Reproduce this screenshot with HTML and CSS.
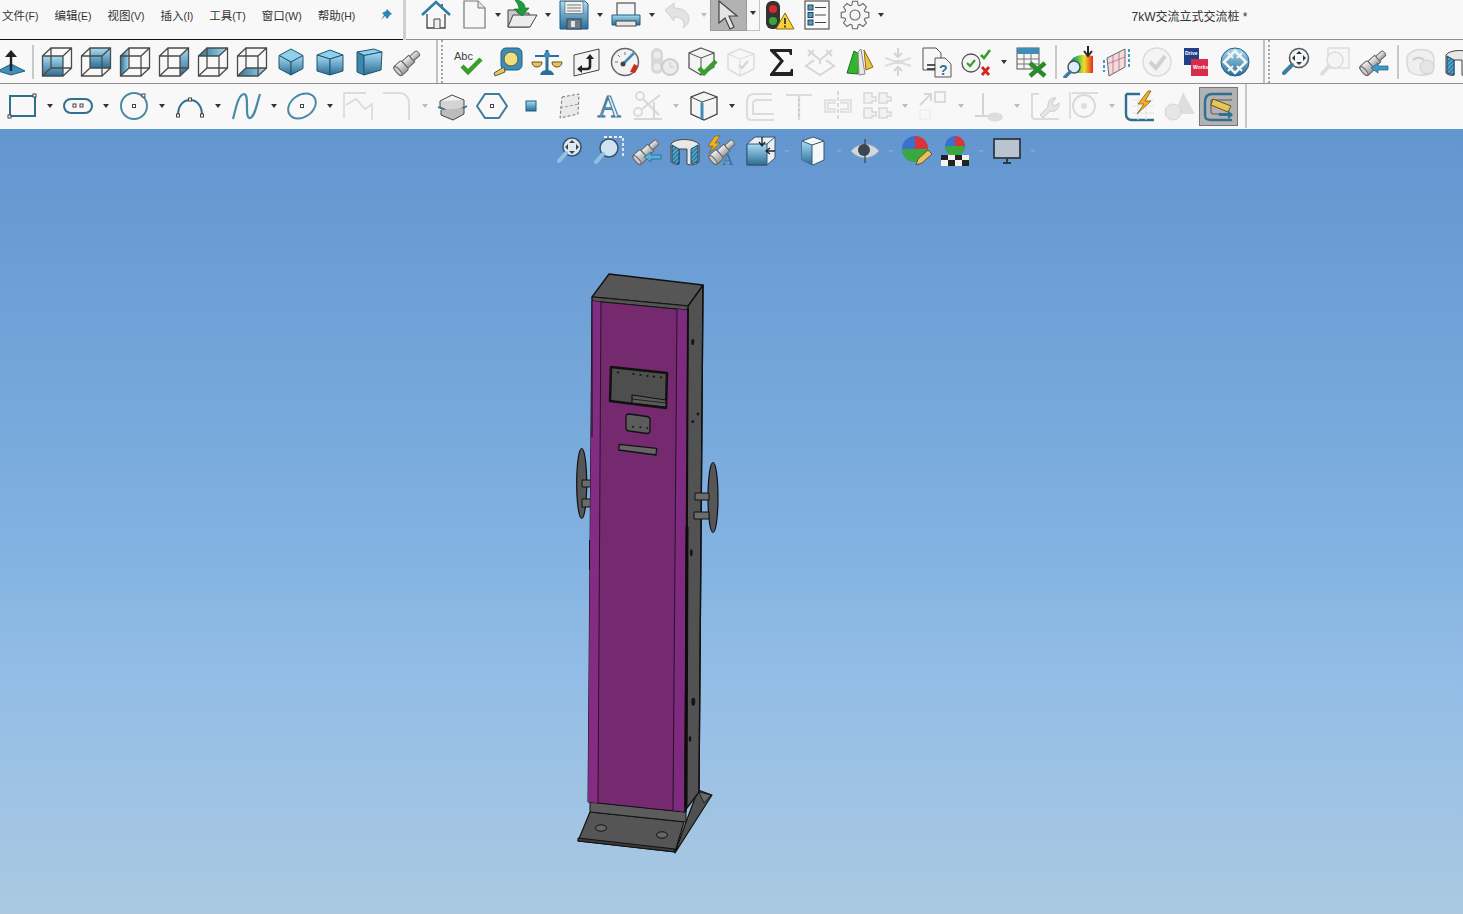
FILE: index.html
```html
<!DOCTYPE html>
<html lang="zh">
<head>
<meta charset="utf-8">
<title>7kW交流立式交流桩</title>
<link rel="stylesheet" href="styles.css">
</head>
<body>
<svg class="defs" aria-hidden="true">
<defs>
<linearGradient id="b" x1="0" y1="0" x2="0" y2="1"><stop offset="0" stop-color="#a8dcf3"/><stop offset="1" stop-color="#2a6d95"/></linearGradient>
<linearGradient id="bh" x1="0" y1="0" x2="1" y2="0"><stop offset="0" stop-color="#2f7299"/><stop offset="1" stop-color="#a8dcf3"/></linearGradient>
<linearGradient id="sil" x1="0" y1="0" x2="0" y2="1"><stop offset="0" stop-color="#f4f4f4"/><stop offset="1" stop-color="#9a9a9a"/></linearGradient>
<linearGradient id="rain" x1="0" y1="0" x2="1" y2="0"><stop offset="0" stop-color="#2540d0"/><stop offset=".35" stop-color="#2ac04a"/><stop offset=".65" stop-color="#f2e02a"/><stop offset="1" stop-color="#e02a1c"/></linearGradient>
<pattern id="hatch" width="3" height="3" patternUnits="userSpaceOnUse" patternTransform="rotate(45)"><rect width="3" height="3" fill="#2d7fa9"/><path d="M0 0v3" stroke="#bfe3f2" stroke-width="1"/></pattern>
<g id="wire" fill="none" stroke="#4a4a4a" stroke-width="1.300"><path d="M1.500 10h20.500v20H1.500zM10 2h20.500v20H10zM1.500 10L10 2M22 10L30.500 2M22 30l8.500-8M1.500 30L10 22"/></g>
<g id="tele"><g transform="rotate(-42 16 16)"><rect x="1" y="10" width="11" height="12" rx="2" fill="url(#sil)" stroke="#666"/><rect x="12" y="11.500" width="9" height="9" fill="url(#sil)" stroke="#666"/><rect x="21" y="13" width="9" height="6" rx="1.500" fill="url(#sil)" stroke="#666"/><ellipse cx="2.500" cy="16" rx="2" ry="5.500" fill="#ccc" stroke="#666"/></g></g>
<g id="mag"><circle cx="19" cy="12" r="9.500" fill="#f2f6f8" stroke="#5a5a5a" stroke-width="1.600"/><path d="M12 19L4 27" stroke="#3d7ea0" stroke-width="4" stroke-linecap="round"/></g>
</defs>

<symbol id="home" viewBox="0 0 32 32"><path d="M7 15v14h18V15" fill="#f6f6f6" stroke="#444" stroke-width="1.300"/><path d="M2 16L16 3l14 13" fill="none" stroke="#2f7ea3" stroke-width="2.600"/><path d="M22 5v5" stroke="#2f7ea3" stroke-width="2"/><path d="M14 29v-9h6v9" fill="#eee" stroke="#444"/></symbol>
<symbol id="doc" viewBox="0 0 32 32"><path d="M6 2h14l7 7v20H6z" fill="#f7f7f7" stroke="#777" stroke-width="1.200"/><path d="M20 2v7h7" fill="#e4e4e4" stroke="#777"/></symbol>
<symbol id="open" viewBox="0 0 32 32"><path d="M2 28V11h8l2 3h11v14z" fill="#c9c9c9" stroke="#444"/><path d="M2 28l5-12h24l-7 12z" fill="#ececec" stroke="#444"/><path d="M9 1c6 0 10 3 10 8h4l-7 8-8-7h5c0-3-2-6-4-9z" fill="#1f9b3c" stroke="#11702a" stroke-width=".7"/></symbol>
<symbol id="save" viewBox="0 0 32 32"><path d="M2 2h25l3 3v25H2z" fill="url(#b)" stroke="#1f5f85"/><rect x="7" y="2.500" width="18" height="12" fill="#f2f2f2" stroke="#555" stroke-width=".6"/><path d="M9 6h14M9 9h14M9 12h14" stroke="#777"/><rect x="9" y="20" width="14" height="10" fill="#6e7e88" stroke="#345"/><rect x="13" y="22" width="4" height="6" fill="#dfe6ea"/></symbol>
<symbol id="print" viewBox="0 0 32 32"><rect x="7" y="4" width="18" height="13" fill="#f5f5f5" stroke="#333"/><path d="M2 16h28v10H2z" fill="url(#b)" stroke="#1f5f85"/><rect x="6" y="22" width="20" height="5" fill="#e8e8e8" stroke="#444"/></symbol>
<symbol id="undo" viewBox="0 0 32 32"><path d="M3 11l9-7v5c9 0 15 4 15 11 0 4-3 7-6 9 2-3 2-11-9-11v4z" fill="#e3e3e3" stroke="#d0d0d0"/></symbol>
<symbol id="cursor" viewBox="0 0 32 32"><path d="M6 2v22l6-5 5 11 4-2-5-11h8z" fill="#e4e4e4" stroke="#444" stroke-width="1.200"/></symbol>
<symbol id="traffic" viewBox="0 0 32 32"><rect x="3" y="2" width="14" height="28" rx="6" fill="#333"/><circle cx="10" cy="10" r="4" fill="#d62a2a"/><circle cx="10" cy="22" r="4" fill="#36a63a"/><path d="M22 14l9 16H13z" fill="#f7d23a" stroke="#8a6a10"/><path d="M22 19v6M22 26.500v2" stroke="#222" stroke-width="1.600"/></symbol>
<symbol id="list" viewBox="0 0 32 32"><rect x="4" y="2" width="24" height="28" fill="#fafafa" stroke="#555" stroke-width="1.200"/><g fill="#4b9ec4" stroke="#245"><rect x="7" y="6" width="5" height="5"/><rect x="7" y="13.500" width="5" height="5"/><rect x="7" y="21" width="5" height="5"/></g><path d="M14 8.500h11M14 16h11M14 23.500h11" stroke="#444" stroke-width="1.200"/></symbol>
<symbol id="gear" viewBox="0 0 32 32"><path d="M12.760 6.010L13.570 2.210H18.430L19.240 6.010L20.770 6.640L24.030 4.530L27.470 7.970L25.360 11.230L25.990 12.760L29.790 13.570V18.430L25.990 19.240L25.360 20.770L27.470 24.030L24.030 27.470L20.770 25.360L19.240 25.990L18.430 29.790H13.570L12.760 25.990L11.230 25.360L7.970 27.470L4.530 24.030L6.640 20.770L6.010 19.240L2.210 18.430V13.570L6.010 12.760L6.640 11.230L4.530 7.970L7.970 4.530L11.230 6.640Z" fill="#f6f6f6" stroke="#666" stroke-width="1.100"/><circle cx="16" cy="16" r="5" fill="#f6f6f6" stroke="#666" stroke-width="1.100"/></symbol>

<symbol id="plane" viewBox="0 0 32 32"><path d="M3 25l13-7 14 7-14 4z" fill="#3f8fb8" stroke="#1f5f85"/><path d="M16 25V9" stroke="#222" stroke-width="2.400"/><path d="M10 11l6-7 6 7z" fill="#222"/></symbol>
<symbol id="cfront" viewBox="0 0 32 32"><rect x="1.500" y="10" width="20.500" height="20" fill="url(#b)"/><use href="#wire"/></symbol>
<symbol id="cback" viewBox="0 0 32 32"><rect x="10" y="2" width="20.500" height="20" fill="url(#b)"/><use href="#wire"/></symbol>
<symbol id="cleft" viewBox="0 0 32 32"><path d="M1.500 10L10 2v20l-8.500 8z" fill="url(#bh)"/><use href="#wire"/></symbol>
<symbol id="cright" viewBox="0 0 32 32"><path d="M22 10l8.500-8v20L22 30z" fill="url(#b)"/><use href="#wire"/></symbol>
<symbol id="ctop" viewBox="0 0 32 32"><path d="M1.500 10L10 2h20.500L22 10z" fill="url(#bh)"/><use href="#wire"/></symbol>
<symbol id="cbot" viewBox="0 0 32 32"><path d="M1.500 30L10 22h20.500L22 30z" fill="url(#bh)"/><use href="#wire"/></symbol>
<symbol id="iso" viewBox="0 0 32 32"><g stroke="#1f5673"><path d="M16 3l12 6.500-12 6.500L4 9.500z" fill="#8fd0ec"/><path d="M4 9.500l12 6.500v13L4 22.500z" fill="url(#b)"/><path d="M28 9.500L16 16v13l12-6.500z" fill="url(#b)"/></g></symbol>
<symbol id="dim" viewBox="0 0 32 32"><g stroke="#1f5673"><path d="M3 9l13-5 13 5-13 4z" fill="#8fd0ec"/><path d="M3 9l13 4v16L3 25z" fill="url(#b)"/><path d="M29 9l-13 4v16l13-4z" fill="url(#b)"/></g></symbol>
<symbol id="tri" viewBox="0 0 32 32"><g stroke="#1f5673"><path d="M4 6l17-3 8 3-18 3.500z" fill="#8fd0ec"/><path d="M4 6l7 3.500V29l-7-3z" fill="#3f86ab"/><path d="M11 9.500L29 6l-1 18-17 5z" fill="url(#b)"/></g></symbol>
<symbol id="scope" viewBox="0 0 32 32"><use href="#tele"/></symbol>

<symbol id="tape" viewBox="0 0 32 32"><rect x="9" y="2" width="21" height="22" rx="5" fill="#3d8db5" stroke="#1f5f85"/><circle cx="19" cy="13" r="7" fill="#f0e07a" stroke="#555"/><path d="M12 21L2 27l1 3 10-4z" fill="#e9c84f" stroke="#555"/></symbol>
<symbol id="scale" viewBox="0 0 32 32"><path d="M16 4v20" stroke="#2a7099" stroke-width="3"/><path d="M4 10h24" stroke="#2a7099" stroke-width="2"/><path d="M9 29c1-4 4-5 7-5s6 1 7 5z" fill="#2a7099"/><path d="M1 16h10c0 3-2 5-5 5s-5-2-5-5zM21 16h10c0 3-2 5-5 5s-5-2-5-5z" fill="#e6c35c" stroke="#6a5520"/><circle cx="16" cy="9" r="3" fill="#3d8db5"/></symbol>
<symbol id="refbox" viewBox="0 0 32 32"><path d="M4 9l25-6v21L4 30z" fill="#f4f4f4" stroke="#444"/><path d="M10 23h7c2 0 3-1 3-3v-8" fill="none" stroke="#222" stroke-width="2.600"/><path d="M16 13l4-5 4 5zM12 19l-5 4 5 4z" fill="#222"/></symbol>
<symbol id="gauge" viewBox="0 0 32 32"><circle cx="16" cy="16" r="13.500" fill="#f2f2f2" stroke="#666" stroke-width="1.500"/><path d="M21 26l4-8 4 2-3 7z" fill="#d42a1c"/><path d="M14 18L25 7" stroke="#3d8db5" stroke-width="2.500"/><circle cx="14" cy="18" r="2.500" fill="#444"/><path d="M6 16h3M16 6v3M9 9l2 2" stroke="#777"/></symbol>
<symbol id="pause" viewBox="0 0 32 32"><rect x="3" y="2" width="12" height="26" rx="6" fill="#d8d8d8"/><circle cx="9" cy="9" r="3.500" fill="#ececec"/><circle cx="9" cy="21" r="3.500" fill="#ececec"/><circle cx="22" cy="21" r="8" fill="#ececec" stroke="#ccc" stroke-width="2"/><path d="M22 16v5h4" stroke="#ccc" fill="none"/></symbol>
<symbol id="cubeok" viewBox="0 0 32 32"><path d="M14 2l13 5v14l-13 8-12-7V7z" fill="#f4f4f4" stroke="#555" stroke-width="1.300"/><path d="M2 7l12 5 13-5M14 12v17" fill="none" stroke="#555"/><path d="M12 22l5 5 12-12" fill="none" stroke="#3a9e2c" stroke-width="4.500"/></symbol>
<symbol id="cubeoff" viewBox="0 0 32 32"><path d="M14 3l14 5v15l-14 7-12-7V8z" fill="#f7f7f7" stroke="#dcdcdc" stroke-width="1.500"/><path d="M2 8l12 5 14-5M14 13v17" fill="none" stroke="#dcdcdc"/><path d="M13 19l3 3 6-7" fill="none" stroke="#d4d4d4" stroke-width="2"/></symbol>
<symbol id="sum" viewBox="0 0 32 32"><path d="M5 3h22v6h-2l-1-3H11l8 9-9 11h15l1-3h2v7H5v-2l10-13L5 5z" fill="#222"/></symbol>
<symbol id="check3" viewBox="0 0 32 32"><path d="M4 4l12 10L28 4M10 14l-8 6 14 9 14-9-8-6M16 14v4" fill="none" stroke="#d6d6d6" stroke-width="2"/><path d="M4 10l6-6M22 4l6 6" stroke="#d6d6d6" stroke-width="2"/></symbol>
<symbol id="draft" viewBox="0 0 32 32"><path d="M4 27L11 5l5 3-1 20z" fill="#35b52f" stroke="#16701a"/><path d="M15 6l3-3 4 25-6 1z" fill="#e8e8e8" stroke="#888"/><path d="M21 4l9 17-7 3z" fill="#eac34a" stroke="#8a6a10"/></symbol>
<symbol id="inter" viewBox="0 0 32 32"><path d="M3 12l9 3h8l9-3M3 20l9-3h8l9 3" fill="none" stroke="#dcdcdc" stroke-width="2"/><path d="M16 2v9M16 21v9M12 7l4 4 4-4M12 25l4-4 4 4" fill="none" stroke="#d4d4d4" stroke-width="2"/></symbol>
<symbol id="chkx" viewBox="0 0 32 32"><circle cx="11" cy="17" r="9" fill="#f4f4f4" stroke="#555" stroke-width="1.300"/><path d="M7 17l3 3 5-6" fill="none" stroke="#3a9e2c" stroke-width="2.200"/><path d="M21 9l3 3 6-8" fill="none" stroke="#3a9e2c" stroke-width="2.600"/><path d="M22 21l7 8M29 21l-7 8" stroke="#d4281c" stroke-width="2.800"/></symbol>
<symbol id="tblx" viewBox="0 0 32 32"><rect x="1" y="2" width="22" height="21" fill="#f6f6f6" stroke="#555"/><rect x="1" y="2" width="22" height="6" fill="#3d8db5"/><path d="M1 13h22M1 18h22M8 8v15M15 8v15" stroke="#777"/><path d="M14 17l15 13M29 17L14 30" stroke="#2c8a2c" stroke-width="4.500"/></symbol>
<symbol id="simul" viewBox="0 0 32 32"><path d="M5 20c4-12 14-12 25-10v17H14z" fill="url(#rain)"/><circle cx="11" cy="21" r="6" fill="#dfeef4" stroke="#456" stroke-width="1.500"/><path d="M7 26l-5 5" stroke="#3d7ea0" stroke-width="3.500" stroke-linecap="round"/><path d="M25 0v8M21 5l4 5 4-5" fill="none" stroke="#222" stroke-width="2"/></symbol>
<symbol id="flow" viewBox="0 0 32 32"><path d="M5 12L23 3v18L7 30z" fill="#efdcd8" stroke="#666"/><path d="M11 9v18M17 6v18M5 18l18-7" stroke="#b58" stroke-width=".7"/><path d="M27 3v20M2 14v12" stroke="#3d9bc6" stroke-width="2" stroke-dasharray="3 2"/></symbol>
<symbol id="okoff" viewBox="0 0 32 32"><circle cx="16" cy="16" r="14" fill="#f4f4f4" stroke="#dcdcdc" stroke-width="1.500"/><path d="M9 16l6 6L24 10" fill="none" stroke="#d0d0d0" stroke-width="4"/></symbol>
<symbol id="rings" viewBox="0 0 32 32"><circle cx="16" cy="16" r="14" fill="url(#b)" stroke="#1f5f85"/><path d="M16 5L5 16l11 11 11-11z" fill="none" stroke="#f4f4f4" stroke-width="2.600"/><path d="M9 7l5 5M23 7l-5 5M9 25l5-5M23 25l-5-5" stroke="#f4f4f4" stroke-width="2"/></symbol>
<symbol id="zoomfit" viewBox="0 0 32 32"><use href="#mag"/><path d="M19 5l3 3h-6zM19 19l3-3h-6zM12 12l3-3v6zM26 12l-3-3v6z" fill="#333"/></symbol>
<symbol id="zoomoff" viewBox="0 0 32 32"><rect x="9" y="2" width="21" height="20" fill="#f6f6f6" stroke="#ddd" stroke-width="1.500"/><circle cx="16" cy="14" r="8" fill="#f4f4f4" stroke="#ddd" stroke-width="1.500"/><path d="M10 20L3 28" stroke="#ddd" stroke-width="3.500" stroke-linecap="round"/></symbol>
<symbol id="prev" viewBox="0 0 32 32"><use href="#tele"/><path d="M30 20H20v-3l-7 5 7 5v-3h10z" fill="#3d9bcc" stroke="#1f5f85" stroke-width=".7"/></symbol>
<symbol id="rotoff" viewBox="0 0 32 32"><path d="M3 9c6-7 18-7 24-2 3 3 2 17 0 20-7 3-17 3-22-1-3-3-4-13-2-17z" fill="#efefef" stroke="#d8d8d8" stroke-width="1.500"/><circle cx="22" cy="21" r="7" fill="#e4e4e4" stroke="#d0d0d0"/><path d="M8 14c3-3 8-3 11 0" fill="none" stroke="#ccc" stroke-width="2"/></symbol>
<symbol id="section" viewBox="0 0 32 32"><path d="M2 9c4-6 22-6 28 0v18c-5 4-10 3-12 2V14H10v15c-3 1-6 0-8-2z" fill="#e8e8e8" stroke="#444"/><path d="M3 10l7 4v15l-7-2zM29 10l-7 4v15l7-2z" fill="url(#hatch)" stroke="#1b4e6b"/></symbol>

<symbol id="rectt" viewBox="0 0 32 32"><rect x="4" y="6" width="25" height="20" fill="none" stroke="#2f7090" stroke-width="2"/><rect x="27" y="4" width="3" height="3" fill="#fff" stroke="#444"/><rect x="2" y="25" width="3" height="3" fill="#fff" stroke="#444"/></symbol>
<symbol id="slot" viewBox="0 0 32 32"><rect x="2" y="9" width="28" height="14" rx="7" fill="none" stroke="#2f7090" stroke-width="2"/><rect x="11" y="14" width="3" height="3" fill="#fff" stroke="#444"/><rect x="18" y="14" width="3" height="3" fill="#fff" stroke="#444"/></symbol>
<symbol id="circ" viewBox="0 0 32 32"><circle cx="16" cy="16" r="13" fill="none" stroke="#4b8aa6" stroke-width="2"/><rect x="14.500" y="14.500" width="3" height="3" fill="#fff" stroke="#444"/><rect x="24" y="4" width="3" height="3" fill="#fff" stroke="#444"/></symbol>
<symbol id="arc" viewBox="0 0 32 32"><path d="M4 25C4 16 9 10 16 10s12 6 12 15" fill="none" stroke="#2f7090" stroke-width="2"/><g fill="#fff" stroke="#444"><rect x="14.500" y="8" width="3" height="3"/><rect x="2.500" y="24" width="3" height="3"/><rect x="26.500" y="24" width="3" height="3"/></g></symbol>
<symbol id="spline" viewBox="0 0 32 32"><path d="M3 29C6 18 8 5 14 4c6 0 0 25 6 24 5-1 7-15 10-24" fill="none" stroke="#4b8aa6" stroke-width="2.200"/></symbol>
<symbol id="ellip" viewBox="0 0 32 32"><ellipse cx="16" cy="16" rx="15" ry="11" transform="rotate(-35 16 16)" fill="none" stroke="#4b8aa6" stroke-width="2"/><rect x="14.500" y="14.500" width="3" height="3" fill="#fff" stroke="#444"/></symbol>
<symbol id="polyoff" viewBox="0 0 32 32"><path d="M2 28V3h22M4 15l10-6 9 10 7-5v16" fill="none" stroke="#dcdcdc" stroke-width="1.800"/></symbol>
<symbol id="filletoff" viewBox="0 0 32 32"><path d="M2 3h16c6 0 10 4 10 10v17" fill="none" stroke="#dcdcdc" stroke-width="2"/></symbol>
<symbol id="plates" viewBox="0 0 32 32"><path d="M3 11l12-6 12 5-11 6z" fill="#f4f4f4" stroke="#444"/><path d="M3 11v6l13 6 11-6v-7" fill="#d4d4d4" stroke="#444"/><path d="M1 17l15 7 14-8" fill="none" stroke="#2f7090" stroke-width="1.500"/><path d="M4 20v5l12 5 11-6v-6" fill="#bcbcbc" stroke="#444"/></symbol>
<symbol id="hex" viewBox="0 0 32 32"><path d="M9 4h14l8 12-8 12H9L1 16z" fill="none" stroke="#3f7d9b" stroke-width="2"/><rect x="14.500" y="14.500" width="3" height="3" fill="#fff" stroke="#444"/></symbol>
<symbol id="pt" viewBox="0 0 32 32"><rect x="11" y="11" width="10" height="10" fill="url(#b)" stroke="#1f5f85"/></symbol>
<symbol id="plnoff" viewBox="0 0 32 32"><path d="M8 7l17-3-1 20-18 4z" fill="#eaeaea" stroke="#777" stroke-dasharray="3 2"/><path d="M6 18l19-4" stroke="#999" stroke-dasharray="3 2"/></symbol>
<symbol id="trimoff" viewBox="0 0 32 32"><circle cx="8" cy="6" r="4" fill="none" stroke="#dcdcdc" stroke-width="2"/><circle cx="6" cy="22" r="4" fill="none" stroke="#dcdcdc" stroke-width="2"/><path d="M11 9l16 16M10 19L28 5M2 29h28M22 12v18" stroke="#d8d8d8" stroke-width="2"/></symbol>
<symbol id="wbox" viewBox="0 0 32 32"><path d="M16 2l13 5v17l-13 6-13-6V7z" fill="#f4f4f4" stroke="#444" stroke-width="1.300"/><path d="M3 7l11 5 15-5M14 12v18" fill="none" stroke="#444"/><path d="M14 13v16" stroke="#3d8db5" stroke-width="3"/></symbol>
<symbol id="offs" viewBox="0 0 32 32"><path d="M28 4H10C5 4 3 7 3 12v14c0 3 2 4 5 4h22" fill="none" stroke="#dcdcdc" stroke-width="2"/><path d="M28 10H13c-3 0-4 2-4 4v10h21" fill="none" stroke="#dcdcdc" stroke-width="2"/></symbol>
<symbol id="toff" viewBox="0 0 32 32"><path d="M3 5h26M16 5v25" fill="none" stroke="#dcdcdc" stroke-width="2.200"/><path d="M16 9v18" stroke="#bbb" stroke-dasharray="2 3"/></symbol>
<symbol id="mirr" viewBox="0 0 32 32"><path d="M16 1v30" stroke="#d0d0d0" stroke-width="1.500" stroke-dasharray="4 2"/><path d="M13 10H3v12h10v-3H6v-6h7zM19 10h10v12H19v-3h7v-6h-7z" fill="#f2f2f2" stroke="#dcdcdc" stroke-width="1.500"/></symbol>
<symbol id="pat" viewBox="0 0 32 32"><path d="M3 3h8v4h4v4H11v2H3zM18 3h8v4h4v4h-4v2h-8zM3 18h8v4h4v4H11v2H3zM18 18h8v4h4v4h-4v2h-8z" fill="#f2f2f2" stroke="#d8d8d8" stroke-width="1.500"/></symbol>
<symbol id="moveoff" viewBox="0 0 32 32"><path d="M3 15L13 5M7 4h7v7" fill="none" stroke="#d8d8d8" stroke-width="2"/><rect x="18" y="2" width="10" height="10" fill="none" stroke="#d8d8d8" stroke-width="1.800"/><rect x="3" y="20" width="10" height="9" fill="none" stroke="#e8e8e8"/></symbol>
<symbol id="relat" viewBox="0 0 32 32"><path d="M10 3v23M2 26h18" fill="none" stroke="#d4d4d4" stroke-width="2"/><ellipse cx="22" cy="27" rx="8" ry="4.500" fill="#ddd"/></symbol>
<symbol id="wrench" viewBox="0 0 32 32"><path d="M2 4h8M3 4v22c0 2 1 3 3 3h24" fill="none" stroke="#dcdcdc" stroke-width="2"/><path d="M11 25l8-8c-1-5 3-10 8-9l-4 5 2 3 5-3c1 5-4 10-9 8l-7 7z" fill="#e4e4e4" stroke="#ccc"/></symbol>
<symbol id="ringoff" viewBox="0 0 32 32"><path d="M2 2v27M4 3h26" stroke="#dcdcdc" stroke-width="1.800"/><circle cx="16" cy="16" r="11" fill="none" stroke="#d8d8d8" stroke-width="1.800"/><circle cx="16" cy="16" r="3" fill="#ddd"/></symbol>
<symbol id="bolt" viewBox="0 0 32 32"><path d="M2 4h14M2 4v20c0 4 2 6 6 6h22" fill="none" stroke="#2f7090" stroke-width="2.400"/><path d="M8 10h22M8 16h22M8 23h22M14 5v25M22 5v25" stroke="#e4e4e4"/><path d="M24 1l-10 13h6l-7 10 14-13h-6l6-10z" fill="#f2b21f" stroke="#8a5a10" stroke-width=".8"/></symbol>
<symbol id="shapes" viewBox="0 0 32 32"><path d="M20 2l12 22H12z" fill="#dedede"/><circle cx="10" cy="22" r="8" fill="#e6e6e6" stroke="#d4d4d4"/></symbol>
<symbol id="instant" viewBox="0 0 32 32"><path d="M30 3H10C5 3 3 6 3 11v13c0 4 2 5 6 5h21" fill="none" stroke="#2f7090" stroke-width="2.400"/><path d="M9 9h21M9 9v11c0 2 1 3 3 3h18" fill="none" stroke="#777" stroke-width="1.500"/><path d="M11 8l18 7-3 6-17-7z" fill="#e7c65a" stroke="#6a5520"/><path d="M17 22h9v-3l5 5-5 4v-3h-9z" fill="#2f7090"/></symbol>

<symbol id="hdep" viewBox="0 0 32 32"><circle cx="17" cy="12" r="9" fill="#dde9f3" stroke="#39556b" stroke-width="1.500"/><path d="M11 18l-7 8" stroke="#8dc3de" stroke-width="4" stroke-linecap="round"/><path d="M17 5l3 3h-6zM17 19l3-3h-6zM10 12l3-3v6zM24 12l-3-3v6z" fill="#444"/></symbol>
<symbol id="harea" viewBox="0 0 32 32"><path d="M11 2h19v19" fill="none" stroke="#e8eff5" stroke-dasharray="3 2" stroke-width="1.800"/><circle cx="16" cy="13" r="9" fill="#cfe2f1" stroke="#39556b" stroke-width="1.500"/><path d="M10 19l-7 8" stroke="#8dc3de" stroke-width="4" stroke-linecap="round"/></symbol>
<symbol id="hprev" viewBox="0 0 32 32"><use href="#tele"/><path d="M30 20H20v-3l-7 5 7 5v-3h10z" fill="#57b0de" stroke="#1f5f85" stroke-width=".7"/></symbol>
<symbol id="horient" viewBox="0 0 32 32"><path d="M2 9l8-7h20v21l-8 7H2z" fill="#eaf1f6" stroke="#39556b"/><path d="M2 9h20v21H2z" fill="url(#b)" stroke="#39556b"/><path d="M22 9l8-7" stroke="#39556b"/><path d="M17 2v8M14 7l3 4 3-4M30 16h-9M25 13l-4 3 4 3" fill="none" stroke="#222" stroke-width="1.300"/></symbol>
<symbol id="hdisp" viewBox="0 0 32 32"><path d="M16 2l11 4v19l-11 5-11-5V6z" fill="#f4f8fb" stroke="#39556b"/><path d="M5 6l10 4v20L5 25z" fill="url(#b)"/><path d="M5 6l10 4 12-4M15 10v20" fill="none" stroke="#39556b"/></symbol>
<symbol id="heye" viewBox="0 0 32 32"><path d="M2 16c7-9 21-9 28 0-7 9-21 9-28 0z" fill="#cfd8df" stroke="#9ba9b4"/><circle cx="15" cy="15" r="6" fill="#3a4650"/><path d="M16 4v24" stroke="#39444e" stroke-width="1.200"/></symbol>
<symbol id="hball" viewBox="0 0 32 32"><circle cx="14" cy="14" r="13" fill="#3a70d0"/><path d="M14 1a13 13 0 0 1 13 13H14z" fill="#d8353a"/><path d="M1 14h26a13 13 0 0 1-26 0z" fill="#39a83f"/><path d="M15 30l2-6 10-9 4 4-10 9z" fill="#eac34a" stroke="#555"/></symbol>
<symbol id="hsc" viewBox="0 0 32 32"><circle cx="16" cy="11" r="10" fill="#3a70d0"/><path d="M16 1a10 10 0 0 1 10 10H16z" fill="#d8353a"/><path d="M6 11h20a10 10 0 0 1-20 0z" fill="#39a83f"/><path d="M2 20h28v11H2z" fill="#f2f2f2"/><path d="M2 20h7v5H2zM16 20h7v5h-7zM9 25h7v6H9zM23 25h7v6h-7z" fill="#222"/></symbol>
<symbol id="hmon" viewBox="0 0 32 32"><rect x="3" y="4" width="26" height="19" fill="#b9c4ce" stroke="#2e3a44" stroke-width="1.800"/><path d="M12 28h8M16 23v5" stroke="#2e3a44" stroke-width="2"/></symbol>
</svg>

<header class="ribbon">
  <div class="row r1">
    <nav class="menu">
      <span class="m">文件<i>(F)</i></span><span class="m">编辑<i>(E)</i></span><span class="m">视图<i>(V)</i></span><span class="m">插入<i>(I)</i></span><span class="m">工具<i>(T)</i></span><span class="m">窗口<i>(W)</i></span><span class="m">帮助<i>(H)</i></span>
    </nav>
    <svg class="pin" viewBox="0 0 14 14"><path d="M8 1l5 5-2 1-2 3-1 1-2-3-4 4 3-5-2-2 2-1 2-1z" fill="#2f86b4"/></svg>
    <span class="vline"></span>
    <div class="tools">
      <svg class="ic"><use href="#home"/></svg>
      <svg class="ic"><use href="#doc"/></svg><span class="drop nar"></span>
      <svg class="ic"><use href="#open"/></svg><span class="drop"></span>
      <svg class="ic"><use href="#save"/></svg><span class="drop"></span>
      <svg class="ic"><use href="#print"/></svg><span class="drop"></span>
      <svg class="ic"><use href="#undo"/></svg><span class="drop off nar2"></span>
      <span class="sel"><svg class="ic"><use href="#cursor"/></svg></span><span class="drop seld"></span>
      <svg class="ic"><use href="#traffic"/></svg>
      <svg class="ic"><use href="#list"/></svg>
      <svg class="ic"><use href="#gear"/></svg><span class="drop"></span>
    </div>
    <div class="title">7kW交流立式交流桩 *</div>
  </div>
  <div class="row r2">
    <svg class="ic first"><use href="#plane"/></svg><span class="sep s1"></span>
    <svg class="ic"><use href="#cfront"/></svg><svg class="ic"><use href="#cback"/></svg><svg class="ic"><use href="#cleft"/></svg><svg class="ic"><use href="#cright"/></svg><svg class="ic"><use href="#ctop"/></svg><svg class="ic"><use href="#cbot"/></svg><svg class="ic"><use href="#iso"/></svg><svg class="ic"><use href="#dim"/></svg><svg class="ic"><use href="#tri"/></svg><svg class="ic"><use href="#scope"/></svg>
    <span class="dsep"></span>
    <svg class="ic" viewBox="0 0 32 32"><text x="1" y="14" class="abc">Abc</text><path d="M9 20l6 6L28 13" fill="none" stroke="#3a9e2c" stroke-width="4.500"/></svg><svg class="ic"><use href="#tape"/></svg><svg class="ic"><use href="#scale"/></svg><svg class="ic"><use href="#refbox"/></svg><svg class="ic"><use href="#gauge"/></svg><svg class="ic"><use href="#pause"/></svg><svg class="ic"><use href="#cubeok"/></svg><svg class="ic"><use href="#cubeoff"/></svg><svg class="ic"><use href="#sum"/></svg><svg class="ic"><use href="#check3"/></svg><svg class="ic"><use href="#draft"/></svg><svg class="ic"><use href="#inter"/></svg>
    <svg class="ic" viewBox="0 0 32 32"><path d="M2 2h13l5 5v17H2z" fill="#f7f7f7" stroke="#555"/><path d="M14 12h10l6 6v13H14z" fill="#f5f5f5" stroke="#555"/><text x="18" y="29" class="q">?</text><path d="M6 19h8M6 23h8" stroke="#222" stroke-width="1.500"/></svg><svg class="ic"><use href="#chkx"/></svg><span class="drop w17"></span>
    <svg class="ic"><use href="#tblx"/></svg><span class="sep"></span>
    <svg class="ic"><use href="#simul"/></svg><svg class="ic"><use href="#flow"/></svg><svg class="ic"><use href="#okoff"/></svg>
    <svg class="ic" viewBox="0 0 32 32"><rect x="4" y="2" width="15" height="17" fill="#1f3f88"/><rect x="11" y="13" width="17" height="17" fill="#d92b4c"/><text x="5" y="9" class="dwt">Drive</text><text x="13" y="23" class="dwt">Works</text></svg><svg class="ic"><use href="#rings"/></svg>
    <span class="dsep"></span>
    <svg class="ic"><use href="#zoomfit"/></svg><svg class="ic"><use href="#zoomoff"/></svg><svg class="ic"><use href="#prev"/></svg><span class="sep"></span>
    <svg class="ic"><use href="#rotoff"/></svg><svg class="ic"><use href="#section"/></svg>
  </div>
  <div class="row r3">
    <svg class="ic"><use href="#rectt"/></svg><span class="drop w17"></span>
    <svg class="ic"><use href="#slot"/></svg><span class="drop w17"></span>
    <svg class="ic"><use href="#circ"/></svg><span class="drop w17"></span>
    <svg class="ic"><use href="#arc"/></svg><span class="drop w17"></span>
    <svg class="ic"><use href="#spline"/></svg><span class="drop w17"></span>
    <svg class="ic"><use href="#ellip"/></svg><span class="drop w17"></span>
    <svg class="ic"><use href="#polyoff"/></svg><svg class="ic"><use href="#filletoff"/></svg><span class="drop w17 off"></span>
    <svg class="ic"><use href="#plates"/></svg><svg class="ic"><use href="#hex"/></svg><svg class="ic"><use href="#pt"/></svg><svg class="ic"><use href="#plnoff"/></svg>
    <svg class="ic ovf" viewBox="0 0 32 32"><text x="16" y="27" class="bigA">A</text></svg><svg class="ic"><use href="#trimoff"/></svg><span class="drop w17 off"></span>
    <svg class="ic"><use href="#wbox"/></svg><span class="drop w17"></span>
    <svg class="ic"><use href="#offs"/></svg><svg class="ic"><use href="#toff"/></svg><svg class="ic"><use href="#mirr"/></svg><svg class="ic"><use href="#pat"/></svg><span class="drop w17 off"></span>
    <svg class="ic"><use href="#moveoff"/></svg><span class="drop w17 off"></span>
    <svg class="ic"><use href="#relat"/></svg><span class="drop w17 off"></span>
    <svg class="ic"><use href="#wrench"/></svg><svg class="ic"><use href="#ringoff"/></svg><span class="drop w17 off"></span>
    <svg class="ic"><use href="#bolt"/></svg><svg class="ic"><use href="#shapes"/></svg>
    <span class="act"><svg class="ic"><use href="#instant"/></svg></span>
    <span class="sep s3"></span>
  </div>
</header>

<main class="view">
  <div class="hud">
    <svg class="hi"><use href="#hdep"/></svg><svg class="hi"><use href="#harea"/></svg><svg class="hi"><use href="#hprev"/></svg><svg class="hi"><use href="#section"/></svg>
    <svg class="hi ovf" viewBox="0 0 32 32"><path d="M8 1L1 11h5L2 18l11-10H8l5-7z" fill="#f2b21f" stroke="#8a5a10" stroke-width=".7"/><use href="#tele"/><text x="15" y="30" class="hA">A</text></svg><svg class="hi"><use href="#horient"/></svg><span class="hd"></span>
    <svg class="hi"><use href="#hdisp"/></svg><span class="hd"></span>
    <svg class="hi"><use href="#heye"/></svg><span class="hd"></span>
    <svg class="hi"><use href="#hball"/></svg><svg class="hi"><use href="#hsc"/></svg><span class="hd"></span>
    <svg class="hi"><use href="#hmon"/></svg><span class="hd"></span>
  </div>
  <svg class="model" viewBox="560 260 170 610">
    <g stroke="#111" stroke-linejoin="round">
      <!-- left handle -->
      <ellipse cx="581.700" cy="483.500" rx="5" ry="35" fill="#565656" stroke-width="1.200"/>
      <path d="M582 480h10v7h-10zM582 499h10v8h-10z" fill="#6b6b6b" stroke-width="1"/>
      <!-- base -->
      <path d="M686 822L698 790l14 5-37 58z" fill="#505050" stroke-width="1.200"/>
      <path d="M699 792l12 3-7 8z" fill="#6a6a6a" stroke-width=".8"/>
      <path d="M590 812l94 10-9 30-97-11z" fill="#555" stroke-width="1.200"/>
      <path d="M578 838l97 11v3l-97-11z" fill="#3a3a3a" stroke-width="1"/>
      <path d="M590 802l96 10v10l-96-10z" fill="#5c5c5c" stroke-width="1"/>
      <ellipse cx="601" cy="828" rx="5.500" ry="3.200" fill="#666" stroke-width="1"/>
      <ellipse cx="662" cy="835" rx="5.500" ry="3.200" fill="#666" stroke-width="1"/>
      <!-- body -->
      <path d="M688 306l15-21-4 507-15 20z" fill="#525252" stroke-width="1.300"/>
      <path d="M592 297L609 274l94 11-15 21z" fill="#565656" stroke-width="1.300"/>
      <path d="M592 297l96 9-1 4-95-9z" fill="#545454" stroke-width=".8"/>
      <path d="M592 301l95 9-3 502-96-10z" fill="#752a70" stroke-width="1"/>
      <path d="M592 301l9 1-3 501-10-1z" fill="#832d82" stroke="none"/>
      <path d="M677 309l10 1-3 502-11-2z" fill="#7e2a7e" stroke="none"/>
      <path d="M601 301l-3 502M677 309l-4 501" fill="none" stroke="#2a1030" stroke-width="1"/>
      <path d="M688 308l-2 504" fill="none" stroke="#0c0c0c" stroke-width="1.600"/>
      <path d="M687 527l-1 280" fill="none" stroke="#0c0c0c" stroke-width="3"/>
      <path d="M592 297v140M589.500 540v30" fill="none" stroke-width="1"/>
      <path d="M703 285l-4 507" fill="none" stroke-width="1.300"/>
      <!-- screen -->
      <path d="M611 367l56 6-1 35-56-7z" fill="#4e4e4e" stroke-width="2.500"/>
      <path d="M632 395l34 5v7l-34-4z" fill="#5a5a5a" stroke-width="1.200"/>
      <path d="M632 399l34 4" fill="none" stroke-width=".8"/>
      <g fill="#141414" stroke="none"><circle cx="618" cy="372.500" r="1.100"/><circle cx="633.500" cy="374" r="1.100"/><circle cx="640.500" cy="375" r="1.100"/><circle cx="647.500" cy="376" r="1.100"/><circle cx="654" cy="376.700" r="1.100"/><circle cx="661" cy="377.300" r="1.100"/></g>
      <!-- small panel -->
      <path d="M629 414l18 2.500q3 .5 3 3v11q0 3-3 3l-18-2.500q-3-.5-3-3v-11q0-3 3-3z" fill="#5c5c5c" stroke-width="1.300"/>
      <g fill="#1a1a1a" stroke="none"><circle cx="633" cy="426.700" r="1"/><circle cx="640.300" cy="427.300" r="1"/><circle cx="647.300" cy="428" r="1"/></g>
      <!-- slot -->
      <path d="M619.300 444.300l37.400 4-.7 6.700-37.300-5z" fill="#666" stroke-width="1.300"/>
      <!-- side holes -->
      <g fill="#151515" stroke="none"><ellipse cx="692.700" cy="342" rx="1.500" ry="3"/><circle cx="698" cy="414" r="1.400"/><circle cx="692.700" cy="421.700" r="1.400"/><ellipse cx="691.300" cy="552.700" rx="1.400" ry="3.500"/><ellipse cx="693.300" cy="701.700" rx="2" ry="4"/><ellipse cx="690" cy="739" rx="1.300" ry="3"/></g>
      <!-- right handle -->
      <ellipse cx="713" cy="497.500" rx="5" ry="35" fill="#565656" stroke-width="1.200"/>
      <path d="M695 493h14v7h-14zM694 512h15v7h-15z" fill="#6b6b6b" stroke-width="1"/>
    </g>
  </svg>
</main>
</body>
</html>
```
FILE: styles.css
```css
* { box-sizing: border-box; }
html, body { margin: 0; height: 100%; overflow: hidden; }
body { width: 1463px; height: 914px; display: flex; flex-direction: column; background: #f8f8f8; font-family: "Liberation Sans", "Noto Sans CJK SC", sans-serif; }
.defs { display: block; width: 0; height: 0; overflow: hidden; }
.abc { font-family: "Liberation Sans", sans-serif; font-size: 11px; fill: #444; }
.q { font-family: "Liberation Sans", sans-serif; font-size: 14px; font-weight: 700; fill: #2f7090; }
.dwt { font-family: "Liberation Sans", sans-serif; font-size: 5px; font-weight: 700; fill: #fff; }
.bigA { font-family: "Liberation Serif", serif; font-size: 32px; text-anchor: middle; fill: #fff; stroke: #3d7ea0; stroke-width: 1.2; }
.hA { font-size: 16px; font-family: "Liberation Serif", serif; fill: #2d6f92; }
.ovf { overflow: visible; }

.ribbon { flex: none; background: #f8f8f8; }
.row { display: flex; align-items: center; overflow: hidden; }
.r1 { height: 40px; padding-bottom: 10px; background: linear-gradient(90deg, #111 403px, #8f8f8f 403px) left bottom / 100% 1px no-repeat; }
.r2 { height: 44px; border-bottom: 1px solid #8f8f8f; }
.r3 { height: 46px; padding: 0 0 1px 2.5px; border-bottom: 1px solid #5b9bd5; }

.menu { display: flex; gap: 16px; padding-left: 2px; font-size: 11.5px; color: #333; width: 355px; flex: none; }
.m { white-space: nowrap; font-family: "Noto Sans CJK SC", sans-serif; }
.m i { font-style: normal; font-size: 10.5px; font-family: "Liberation Sans", sans-serif; }
.pin { width: 14px; height: 14px; margin-left: 24px; flex: none; }
.vline { width: 3px; height: 40px; background: #cfcfcf; margin-left: 10px; flex: none; align-self: flex-start; }
.tools { display: flex; align-items: center; margin-left: 11px; flex: none; }
.title { flex: 1; text-align: center; padding-left: 28px; font-size: 12px; color: #333; font-family: "Liberation Sans", "Noto Sans CJK SC", sans-serif; }

.ic { width: 32px; height: 32px; margin: 0 3.5px; flex: none; display: block; }
.r1 .ic { margin: 0 3px; }
.first { margin-left: -5px; margin-right: 0; }
.drop { width: 14px; height: 32px; flex: none; display: flex; align-items: center; justify-content: center; }
.drop::before { content: ""; border: 3.5px solid transparent; border-top: 4px solid #333; border-bottom: 0; }
.drop.off::before { border-top-color: #bdbdbd; }
.nar { width: 10px; }
.nar2 { width: 13px; }
.w17 { width: 17px; }
.sel { display: block; width: 37px; height: 36px; margin-top: -4px; padding-top: 3px; background: #b2b2b2; border: 1px solid #9a9a9a; flex: none; }
.r1 .sel .ic { margin: 0 2px; }
.seld { width: 13px; height: 36px; margin-top: -4px; border: 1px solid #c4c4c4; border-left: 0; }
.sep { width: 2px; height: 34px; background: #c9c9c9; margin: 0 3px; flex: none; }
.s1 { margin: 0 3.5px 0 5px; }
.s3 { align-self: stretch; height: auto; margin: 0 0 0 7px; }
.dsep { align-self: stretch; width: 7px; margin: 0 7px 0 8px; border-left: 2px solid #c0c0c0; border-right: 2px dotted #a4a4a4; flex: none; }
.act { display: block; width: 39px; height: 39px; padding: 3px 0; background: #b2b2b2; border: 1px solid #777; flex: none; }
.act .ic { margin: 0 2.5px; }

.view { flex: 1; position: relative; background: linear-gradient(#6395cf 0%, #7fb0e0 50%, #93bde6 70%, #aac9e1 100%); }
.hud { display: flex; align-items: center; height: 42px; padding-left: 552px; }
.hi { width: 32px; height: 32px; margin: 0 3px; flex: none; display: block; }
.hd { width: 14px; height: 32px; flex: none; display: flex; align-items: center; justify-content: center; }
.hd::before { content: ""; border: 3px solid transparent; border-top: 3px solid #8aa6c4; border-bottom: 0; }
.model { position: absolute; left: 560px; top: 130px; width: 170px; height: 610px; filter: blur(.35px); }
```
